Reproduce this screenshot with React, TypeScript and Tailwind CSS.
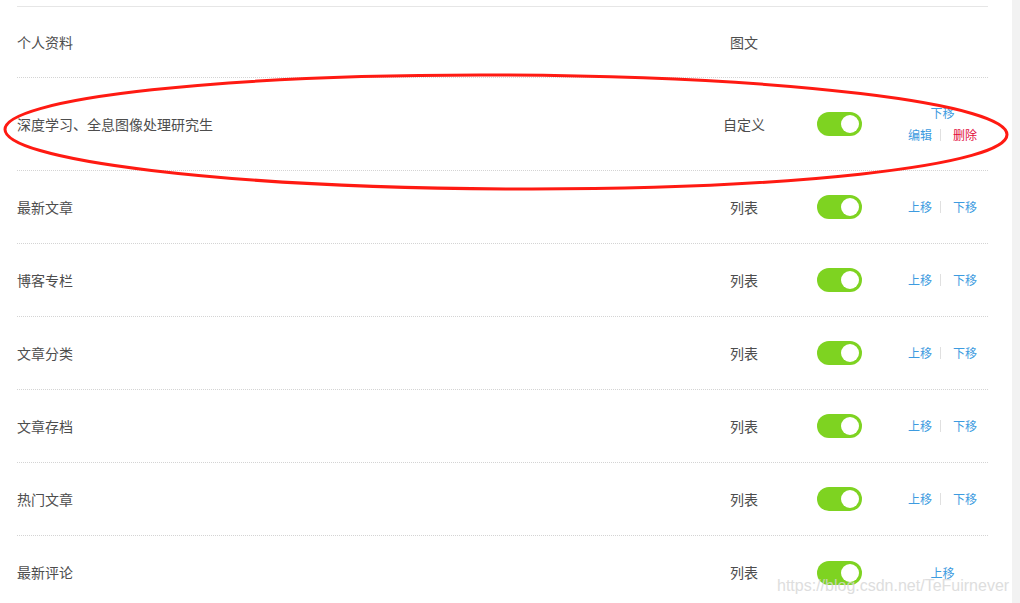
import React from "react";

type Row = {
  name: string;
  type: string;
  toggle?: boolean;
  up?: boolean;
  down?: boolean;
  last?: boolean;
};

const rows: Row[] = [
  { name: "最新文章", type: "列表", toggle: true, up: true, down: true },
  { name: "博客专栏", type: "列表", toggle: true, up: true, down: true },
  { name: "文章分类", type: "列表", toggle: true, up: true, down: true },
  { name: "文章存档", type: "列表", toggle: true, up: true, down: true },
  { name: "热门文章", type: "列表", toggle: true, up: true, down: true },
  { name: "最新评论", type: "列表", toggle: true, up: true, last: true },
];

const font = { fontFamily: '"Noto Sans CJK SC", "Microsoft YaHei", sans-serif' };

function Toggle() {
  return (
    <div className="flex h-[24px] w-[45px] items-center justify-end rounded-full bg-[#7ed321] pr-[3px]">
      <div className="h-[18px] w-[18px] rounded-full bg-white" />
    </div>
  );
}

function Sep() {
  return <span className="ml-[8px] mr-[12px] inline-block h-[12px] w-px bg-[#e0e0e0]" />;
}

function Link({ children, red }: { children: React.ReactNode; red?: boolean }) {
  return (
    <span className={red ? "text-[#e20c3c]" : "text-[#3d9be0]"}>{children}</span>
  );
}

function ListRow({ row }: { row: Row }) {
  return (
    <div
      className={
        "flex h-[73px] items-center " +
        (row.last ? "" : "border-b border-dotted border-[#d4d4d4]")
      }
    >
      <div className="flex-1 text-[14px] text-[#4d4d4d]">{row.name}</div>
      <div className="w-[80px] text-center text-[14px] text-[#4d4d4d]">{row.type}</div>
      <div className="ml-[33px] w-[45px]">{row.toggle && <Toggle />}</div>
      <div className="ml-[38px] flex w-[85px] items-center justify-center text-[12px]">
        {row.up && <Link>上移</Link>}
        {row.up && row.down && <Sep />}
        {row.down && <Link>下移</Link>}
      </div>
      <div className="w-[3px]" />
    </div>
  );
}

export default function App() {
  return (
    <div className="relative flex h-[603px] w-[1020px] overflow-hidden bg-white" style={font}>
      <div className="w-[1012px] pl-[17px] pt-[6px]">
        <div className="w-[971px] border-t border-[#e6e6e6]">
          <div className="flex h-[71px] items-center border-b border-dotted border-[#d4d4d4]">
            <div className="flex-1 text-[14px] text-[#4d4d4d]">个人资料</div>
            <div className="w-[80px] text-center text-[14px] text-[#4d4d4d]">图文</div>
            <div className="w-[204px]" />
          </div>

          <div className="flex h-[93px] items-center border-b border-dotted border-[#d4d4d4]">
            <div className="flex-1 text-[14px] text-[#4d4d4d]">深度学习、全息图像处理研究生</div>
            <div className="w-[80px] text-center text-[14px] text-[#4d4d4d]">自定义</div>
            <div className="ml-[33px] w-[45px]">
              <Toggle />
            </div>
            <div className="ml-[38px] flex w-[85px] flex-col items-center text-[12px] leading-[22px]">
              <Link>下移</Link>
              <div className="flex items-center">
                <Link>编辑</Link>
                <Sep />
                <Link red>删除</Link>
              </div>
            </div>
            <div className="w-[3px]" />
          </div>

          {rows.map((r) => (
            <ListRow key={r.name} row={r} />
          ))}
        </div>
      </div>
      <div className="w-[8px] bg-[#f2f2f2]" />

      <svg className="pointer-events-none absolute left-0 top-0" width="1020" height="603">
        <ellipse
          cx="506"
          cy="132"
          rx="501"
          ry="57"
          fill="none"
          stroke="#ff1a12"
          strokeWidth="3"
          transform="rotate(0.3 506 132)"
        />
      </svg>

      <div
        className="pointer-events-none absolute left-[777px] top-[576px] whitespace-nowrap text-[16px] leading-[20px] text-[#d6d6d6] opacity-80"
        style={{ fontFamily: '"Liberation Sans", Arial, sans-serif' }}
      >
        https://blog.csdn.net/TeFuirnever
      </div>
    </div>
  );
}
